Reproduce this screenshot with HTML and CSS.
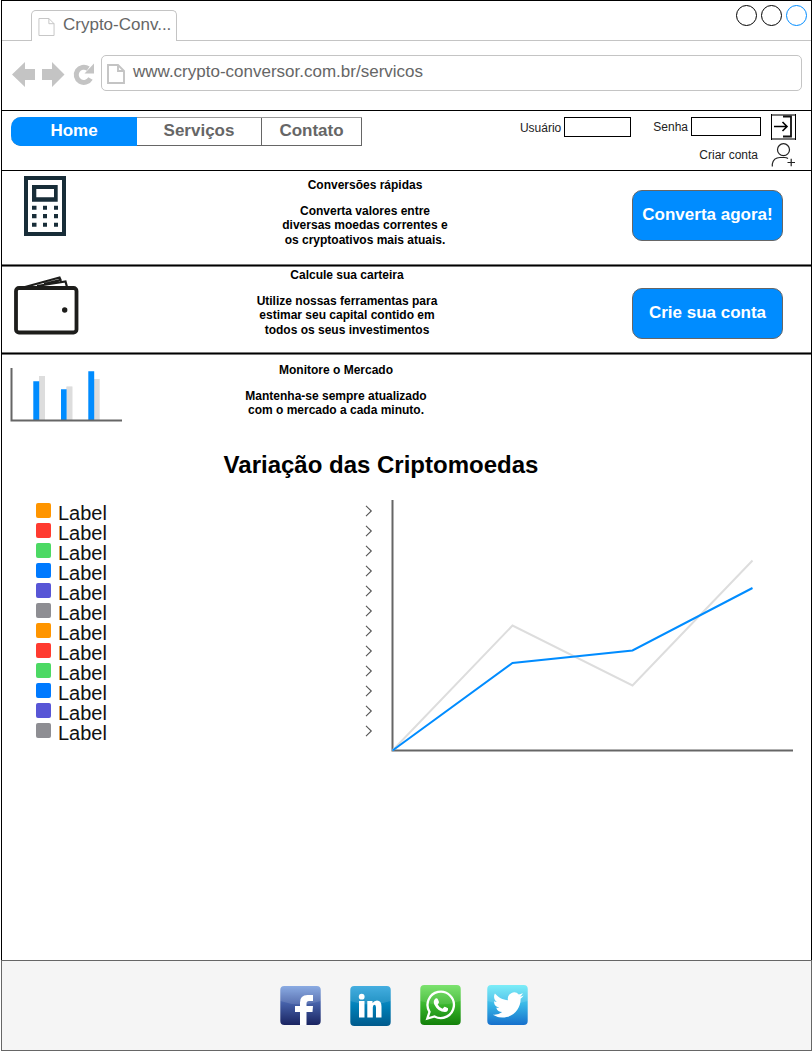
FILE: index.html
```html
<!DOCTYPE html>
<html lang="pt-BR">
<head>
<meta charset="utf-8">
<title>Crypto-Conversor</title>
<link rel="stylesheet" href="styles.css">
</head>
<body>
<svg width="0" height="0" class="defs">
  <defs>
    <symbol id="page" viewBox="0 0 18 20"><path d="M1 1H11.500L17 6.500V19H1ZM11.500 1V6.500H17" fill="none" stroke="#c4c4c4"/></symbol>
    <symbol id="chevron" viewBox="0 0 8 12"><path d="M1 .8L6.300 6L1 11.200" fill="none" stroke="#555" stroke-width="1.100"/></symbol>
  </defs>
</svg>
<div class="window">
  <div class="tabs">
    <div class="tab"><svg class="tab-icon"><use href="#page"/></svg><span>Crypto-Conv...</span></div>
    <svg class="controls" width="72" height="22" fill="none" stroke="#000"><circle cx="10.500" cy="10.500" r="10"/><circle cx="35.500" cy="10.500" r="10"/><circle cx="60.500" cy="10.500" r="10" stroke="#008cff"/></svg>
  </div>
  <div class="toolbar">
    <svg class="arrows" width="84" height="26" fill="#c4c4c4">
      <path d="M0 12.500L13 0V7H23V18H13V25Z"/>
      <path d="M52.500 12.500L40 0V7H30V18H40V25Z"/>
      <path d="M78.500 16.500A7.600 7.600 0 1 1 76.200 6.600" fill="none" stroke="#c4c4c4" stroke-width="5"/>
      <path d="M82 1.500V11.500H72.500Z"/>
    </svg>
    <div class="url"><svg class="url-icon" viewBox="0 0 18 20"><path d="M1 1H11L17 7V19H1ZM11 1V7H17" fill="none" stroke="#c4c4c4" stroke-width="1.900"/></svg><span>www.crypto-conversor.com.br/servicos</span></div>
  </div>
  <header class="header">
    <nav class="nav"><a class="home">Home</a><a class="services">Serviços</a><a class="contact">Contato</a></nav>
    <div class="account">
      <div class="login">
        <span>Usuário</span><i class="field user"></i>
        <span class="pass-label">Senha</span><i class="field pass"></i>
        <svg class="enter" width="25" height="26" fill="none"><path d="M0 1H25M0 25H25" stroke="#777" stroke-width="2"/><path d="M.5 0V26M24.500 0V26" stroke="#000"/><path d="M12 2.500H20V22.500H12" stroke="#111" stroke-width="1.800"/><path d="M3 12.500H15.500M11.500 8L16 12.500L11.500 17" stroke="#000" stroke-width="1.600"/></svg>
      </div>
      <div class="signup">
        <span>Criar conta</span>
        <svg width="25" height="25" fill="none" stroke="#222" stroke-width="1.200"><circle cx="12.500" cy="6.700" r="6"/><path d="M1.300 23.500V21Q2.500 14.500 9 14.500H13.500Q15.500 14.500 17 15.500M16.500 19.500H24M20.200 15.800V23.200"/></svg>
      </div>
    </div>
  </header>

  <section class="feature convert">
    <svg class="calc" width="42" height="60" fill="#182d38">
      <path fill-rule="evenodd" d="M0 0H42V60H0ZM4 4V56H38V4ZM8 9H33.700V25.700H8ZM12.300 13V21.300H30V13Z"/>
      <path d="M8 29.700h4.500v4H8zM19 29.700h4v4h-4zM30 29.700h4v4h-4zM8 38h4.500v4.300H8zM19 38h4v4.300h-4zM30 38h4v4.300h-4zM8 46.700h4.500v4H8zM19 46.700h4v4h-4zM30 46.700h4v4h-4z"/>
    </svg>
    <div class="copy"><h2>Conversões rápidas</h2><p>Converta valores entre<br>diversas moedas correntes e<br>os cryptoativos mais atuais.</p></div>
    <a class="button">Converta agora!</a>
  </section>
  <section class="feature wallet-row">
    <svg class="wallet" width="66" height="59" fill="none" stroke="#1d1d1b">
      <rect x="2" y="12" width="60.500" height="44.500" rx="3" stroke-width="3.800"/>
      <path d="M11 11L45.500 1.500L47 5M23 10L51.500 5.500L53 11M30 8L46 4" stroke-width="2.200"/>
      <circle cx="50.700" cy="34" r="2.700" fill="#1d1d1b" stroke="none"/>
    </svg>
    <div class="copy"><h2>Calcule sua carteira</h2><p>Utilize nossas ferramentas para<br>estimar seu capital contido em<br>todos os seus investimentos</p></div>
    <a class="button">Crie sua conta</a>
  </section>
  <section class="feature market">
    <svg class="bars" width="112" height="54">
      <path d="M29 8h6v44h-6zM56.500 18.500h6V52h-6zM84 0h0z" fill="#ddd"/>
      <path d="M29 8.300h5.500V52H29zM56.500 18.700h5.500V52h-5.500zM84 11h5.700V52H84z" fill="#ddd"/>
      <path d="M23.300 13.300h5.900V52h-5.900zM51 21.300h5.600V52H51zM78.300 3.300h5.900V52h-5.900z" fill="#008cff"/>
      <path d="M1.500 0V52.500H112" fill="none" stroke="#666" stroke-width="2"/>
    </svg>
    <div class="copy"><h2>Monitore o Mercado</h2><p>Mantenha-se sempre atualizado<br>com o mercado a cada minuto.</p></div>
  </section>

  <h1 class="title">Variação das Criptomoedas</h1>
  <section class="data">
    <ul class="coins">
      <li><i class="swatch orange"></i><span>Label</span><svg><use href="#chevron"/></svg></li>
      <li><i class="swatch red"></i><span>Label</span><svg><use href="#chevron"/></svg></li>
      <li><i class="swatch green"></i><span>Label</span><svg><use href="#chevron"/></svg></li>
      <li><i class="swatch blue"></i><span>Label</span><svg><use href="#chevron"/></svg></li>
      <li><i class="swatch purple"></i><span>Label</span><svg><use href="#chevron"/></svg></li>
      <li><i class="swatch gray"></i><span>Label</span><svg><use href="#chevron"/></svg></li>
      <li><i class="swatch orange"></i><span>Label</span><svg><use href="#chevron"/></svg></li>
      <li><i class="swatch red"></i><span>Label</span><svg><use href="#chevron"/></svg></li>
      <li><i class="swatch green"></i><span>Label</span><svg><use href="#chevron"/></svg></li>
      <li><i class="swatch blue"></i><span>Label</span><svg><use href="#chevron"/></svg></li>
      <li><i class="swatch purple"></i><span>Label</span><svg><use href="#chevron"/></svg></li>
      <li><i class="swatch gray"></i><span>Label</span><svg><use href="#chevron"/></svg></li>
    </ul>
    <svg class="chart" width="402" height="252" fill="none" stroke-width="2">
      <path d="M1.500 0V250.500H402" stroke="#666"/>
      <path d="M1.500 250.500L121.500 125.500L241.500 185.500L361.500 60.500" stroke="#ddd"/>
      <path d="M1.500 250.500L121.500 163L241.500 150.500L361.500 88" stroke="#008cff"/>
    </svg>
  </section>
</div>
<footer class="footer">
  <svg class="social" viewBox="0 0 41 40">
    <defs><linearGradient id="fb" x2="0" y2="1"><stop stop-color="#7ba0df"/><stop offset=".45" stop-color="#4560a8"/><stop offset="1" stop-color="#1a2461"/></linearGradient></defs>
    <rect x=".3" y="1" width="40.400" height="39" rx="4" fill="url(#fb)"/>
    <path d="M.3 16Q20 23 40.700 16V5Q40.700 1 36.700 1H4.300Q.3 1 .3 5Z" fill="#fff" opacity=".12"/>
    <path d="M20 40V27H15V21H20V17.500Q20 10 27.500 10H33V16H29Q26.500 16 26.500 18.500V21H33L32.500 27H26.500V40Z" fill="#fff"/>
  </svg>
  <svg class="social" viewBox="0 0 41 40">
    <defs><linearGradient id="li" x2="0" y2="1"><stop stop-color="#2ba3dc"/><stop offset=".5" stop-color="#0080b8"/><stop offset="1" stop-color="#005a8c"/></linearGradient></defs>
    <rect x=".3" y="1" width="40.400" height="40" rx="4" fill="url(#li)"/>
    <path d="M.3 16Q20 23 40.700 16V5Q40.700 1 36.700 1H4.300Q.3 1 .3 5Z" fill="#fff" opacity=".12"/>
    <circle cx="11.700" cy="11.700" r="2.900" fill="#fff"/>
    <path d="M9 16H14.500V32.500H9ZM17.300 16H22.500V18Q24.300 15.500 27 15.500Q31.500 15.500 31.500 21.500V32.500H26V22.500Q26 19.700 24.500 19.700Q22.800 19.700 22.800 22.500V32.500H17.300Z" fill="#fff"/>
  </svg>
  <svg class="social" viewBox="0 0 41 40">
    <defs><linearGradient id="wa" x2="0" y2="1"><stop stop-color="#6ee05f"/><stop offset=".5" stop-color="#38b52b"/><stop offset="1" stop-color="#13800a"/></linearGradient></defs>
    <rect x=".3" width="40.400" height="40" rx="4" fill="url(#wa)"/>
    <path d="M.3 16Q20 23 40.700 16V4Q40.700 0 36.700 0H4.300Q.3 0 .3 4Z" fill="#fff" opacity=".1"/>
    <path d="M7.300 33.500L9.500 26.800A13.200 13.200 0 1 1 14.500 31.500Z" fill="none" stroke="#fff" stroke-width="2.300"/>
    <path d="M15.500 13.500Q17.200 12.800 18 14.500L19 17Q19.200 18 17.700 19.400Q19.300 22.500 22.500 23.800L24.500 21.800Q25.200 21.500 28 23.300Q28.500 26.800 25 27Q18 27 14.300 19.500Q12.800 15.500 15.500 13.500Z" fill="#fff"/>
  </svg>
  <svg class="social" viewBox="0 0 41 40">
    <defs><linearGradient id="tw" x2="0" y2="1"><stop stop-color="#6aebf7"/><stop offset=".5" stop-color="#37b5e6"/><stop offset="1" stop-color="#1670cc"/></linearGradient></defs>
    <rect x=".3" width="40.400" height="40" rx="4" fill="url(#tw)"/>
    <path d="M.3 16Q20 23 40.700 16V4Q40.700 0 36.700 0H4.300Q.3 0 .3 4Z" fill="#fff" opacity=".12"/>
    <path transform="translate(5.800 4.500) scale(1.290)" d="M23.950 4.570a10 10 0 0 1-2.820.78 4.960 4.960 0 0 0 2.160-2.730 9.900 9.900 0 0 1-3.130 1.190 4.920 4.920 0 0 0-8.380 4.490C7.690 8.100 4.070 6.130 1.640 3.160a4.820 4.820 0 0 0-.67 2.480c0 1.710.87 3.210 2.190 4.100a4.900 4.900 0 0 1-2.230-.62v.06a4.920 4.920 0 0 0 3.950 4.830 5 5 0 0 1-2.210.08 4.940 4.940 0 0 0 4.600 3.420A9.870 9.870 0 0 1 0 19.540a13.990 13.990 0 0 0 7.550 2.210c9.050 0 14-7.500 14-13.980 0-.21 0-.42-.02-.63a9.940 9.940 0 0 0 2.420-2.570z" fill="#fff"/>
  </svg>
</footer>
</body>
</html>
```
FILE: styles.css
```css
* { box-sizing: border-box; }
body { margin: 0; width: 812px; padding-left: 1px; background: #fff; color: #000; font-family: "Liberation Sans", Arial, sans-serif; }
svg { display: block; flex: none; }
.defs { position: absolute; }
h1, h2, p, ul { margin: 0; padding: 0; }
.window { height: 960px; border: 1px solid #000; border-bottom: 0; }

.tabs { display: flex; justify-content: space-between; align-items: flex-start; height: 40px; padding: 4px 3px 0 29px; border-bottom: 1px solid #c4c4c4; }
.tab { display: flex; align-items: center; width: 146px; height: 31px; margin-top: 5px; padding: 0 0 3px 6px; gap: 8px; border: 1px solid #c4c4c4; border-bottom: 0; border-radius: 5px 5px 0 0; background: #fff; color: #666; font-size: 17px; white-space: nowrap; }
.tab-icon { width: 17px; height: 20px; margin-top: 4px; }

.toolbar { display: flex; height: 70px; padding: 14px 9px 0 10px; border-bottom: 1px solid #000; }
.arrows { margin: 7px 5px 0 0; }
.url { display: flex; align-items: center; flex: 1; height: 36px; padding: 0 0 2px 5px; gap: 8px; border: 1px solid #c4c4c4; border-radius: 5px; color: #666; font-size: 17px; }
.url-icon { width: 18px; height: 20px; margin-top: 3px; }

.header { display: flex; justify-content: space-between; height: 60px; padding: 0 15px 0 9px; border-bottom: 1px solid #000; }
.nav { display: flex; width: 351px; height: 29px; margin-top: 6px; border: 1px solid #666; border-top-color: #999; border-left: 0; border-radius: 10px 0 0 10px; font-size: 17px; font-weight: bold; line-height: 25px; color: #666; text-align: center; }
.home { width: 126px; height: 29px; margin-top: -1px; padding-top: 1px; border-radius: 10px 0 0 10px; background: #008cff; color: #fff; }
.services { width: 125px; border-right: 1px solid #666; }
.contact { flex: 1; }
.account { font-size: 12px; line-height: 14px; color: #222; }
.login { display: flex; align-items: flex-start; padding-top: 3px; }
.login span { margin-top: 7px; }
.field { border: 1px solid #000; margin-top: 3px; }
.user { width: 67px; height: 20px; margin-left: 3px; }
.login .pass-label { margin: 6px 3px 0 22px; }
.pass { width: 70px; height: 19px; margin-right: 10px; }
.signup { display: flex; justify-content: flex-end; gap: 13px; margin-top: 3px; }
.signup span { padding-top: 5px; }

.feature { display: grid; grid-template-columns: 239px 190px 1fr; align-items: start; }
.convert { grid-template-columns: 268px 190px 1fr; height: 96px; border-bottom: 3px solid #777; border-image: linear-gradient(#777 33%, #000 33% 67%, #777 67%) 3; }
.wallet-row { grid-template-columns: 250px 190px 1fr; height: 88px; border-bottom: 3px solid; border-image: linear-gradient(#777 33%, #000 33% 67%, #777 67%) 3; }
.convert, .wallet-row { border-image: none; border-bottom: 0; background: linear-gradient(#777, #777) bottom / 100% 1px no-repeat, linear-gradient(#000, #000) 0 calc(100% - 1px) / 100% 1px no-repeat, linear-gradient(#777, #777) 0 calc(100% - 2px) / 100% 1px no-repeat; }
.calc { margin: 5px 0 0 22px; }
.wallet { margin: 9px 0 0 12px; }
.bars { margin: 13px 0 0 8px; }
.copy { font-size: 12px; font-weight: bold; line-height: 14.4px; text-align: center; white-space: nowrap; padding-top: 7px; }
.copy h2 { font-size: 12px; line-height: 14px; margin-bottom: 12px; }
.wallet-row .copy { padding-top: 1px; }
.market .copy { padding-top: 8px; }
.button { justify-self: end; width: 151px; height: 51px; margin: 19px 28px 0 0; border: 1px solid #666; border-radius: 10px; background: #008cff; color: #fff; font-size: 17px; font-weight: bold; line-height: 47px; text-align: center; }
.wallet-row .button { margin-top: 21px; }
.market { height: 96px; }

.title { width: 758px; font-size: 24px; line-height: 28px; text-align: center; }
.data { display: flex; padding-top: 21px; }
.coins { width: 337px; margin: 3px 18px 0 34px; list-style: none; }
.coins li { display: flex; height: 20px; font-size: 20px; line-height: 20px; }
.coins span { flex: 1; padding-left: 7px; color: #111; }
.coins svg { width: 8px; height: 12px; margin-top: 2px; }
.swatch { width: 15px; height: 15px; border-radius: 2px; }
.orange { background: #ff9500; }
.red { background: #ff3b30; }
.green { background: #4cd964; }
.blue { background: #007aff; }
.purple { background: #5856d6; }
.gray { background: #8e8e93; }

.footer { display: flex; gap: 29px; height: 91px; padding: 24px 0 0 278px; border: 1px solid #666; background: #f5f5f5; }
.social { width: 41px; height: 40px; overflow: visible; }
.social:last-child { margin-left: -3px; }
```
